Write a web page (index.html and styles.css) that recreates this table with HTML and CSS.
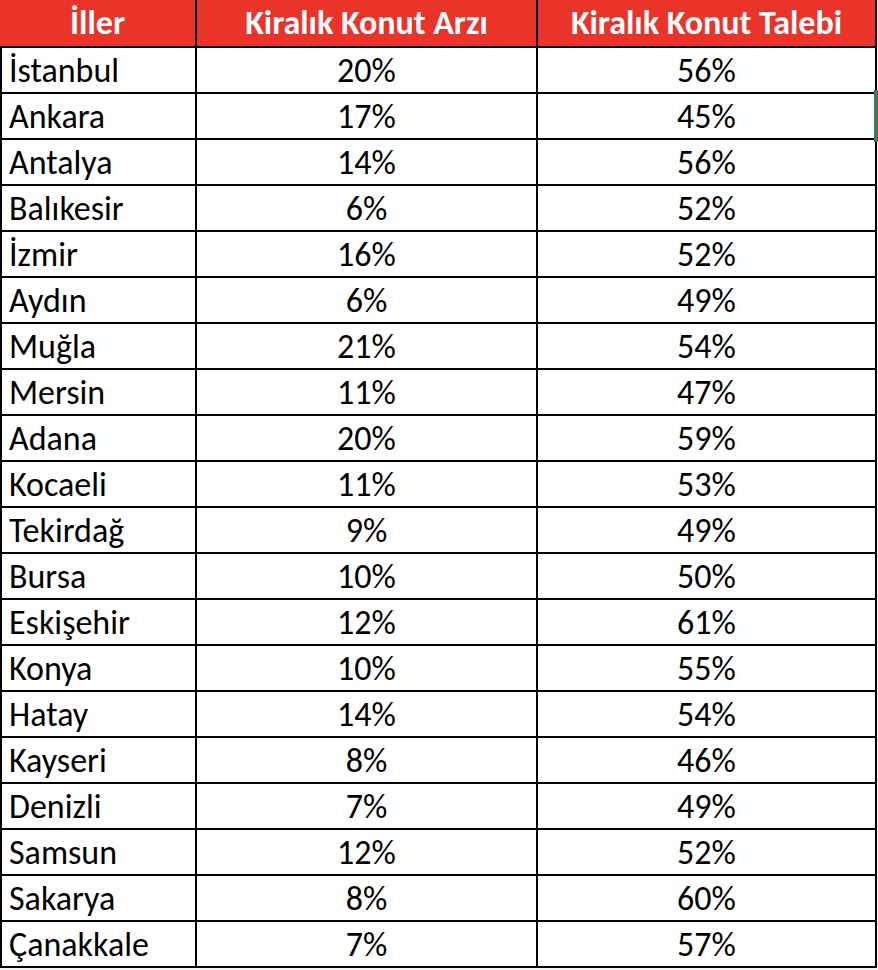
FILE: index.html
```html
<!DOCTYPE html>
<html lang="tr">
<head>
<meta charset="utf-8">
<title>Kiralık Konut</title>
<link rel="stylesheet" href="styles.css">
</head>
<body>
<div class="sheet">
  <div class="grid">
    <div class="hd">İller</div>
    <div class="hd">Kiralık Konut Arzı</div>
    <div class="hd">Kiralık Konut Talebi</div>

    <div class="c name">İstanbul</div><div class="c num">20%</div><div class="c num">56%</div>
    <div class="c name">Ankara</div><div class="c num">17%</div><div class="c num">45%</div>
    <div class="c name">Antalya</div><div class="c num">14%</div><div class="c num">56%</div>
    <div class="c name">Balıkesir</div><div class="c num">6%</div><div class="c num">52%</div>
    <div class="c name">İzmir</div><div class="c num">16%</div><div class="c num">52%</div>
    <div class="c name">Aydın</div><div class="c num">6%</div><div class="c num">49%</div>
    <div class="c name">Muğla</div><div class="c num">21%</div><div class="c num">54%</div>
    <div class="c name">Mersin</div><div class="c num">11%</div><div class="c num">47%</div>
    <div class="c name">Adana</div><div class="c num">20%</div><div class="c num">59%</div>
    <div class="c name">Kocaeli</div><div class="c num">11%</div><div class="c num">53%</div>
    <div class="c name">Tekirdağ</div><div class="c num">9%</div><div class="c num">49%</div>
    <div class="c name">Bursa</div><div class="c num">10%</div><div class="c num">50%</div>
    <div class="c name">Eskişehir</div><div class="c num">12%</div><div class="c num">61%</div>
    <div class="c name">Konya</div><div class="c num">10%</div><div class="c num">55%</div>
    <div class="c name">Hatay</div><div class="c num">14%</div><div class="c num">54%</div>
    <div class="c name">Kayseri</div><div class="c num">8%</div><div class="c num">46%</div>
    <div class="c name">Denizli</div><div class="c num">7%</div><div class="c num">49%</div>
    <div class="c name">Samsun</div><div class="c num">12%</div><div class="c num">52%</div>
    <div class="c name">Sakarya</div><div class="c num">8%</div><div class="c num">60%</div>
    <div class="c name">Çanakkale</div><div class="c num">7%</div><div class="c num">57%</div>
  </div>
  <div class="sel-mark"></div>
</div>
</body>
</html>
```

FILE: styles.css
```css
html, body {
  margin: 0;
  padding: 0;
  background: #ffffff;
}

.sheet {
  position: relative;
  width: 878px;
  height: 970px;
  background: #f3f3f3;
}

.grid {
  display: grid;
  grid-template-columns: 195px 339px 337px;
  grid-template-rows: 46px repeat(20, 44px);
  column-gap: 2px;
  row-gap: 2px;
  width: 877px;
  padding: 0 2px 2px 0;
  box-sizing: border-box;
  background: #000000;
  font-family: Carlito, Calibri, Lato, "Liberation Sans", sans-serif;
  color: #000000;
}

.hd {
  background: #e8342a;
  color: #ffffff;
  font-weight: 700;
  font-size: 34px;
  text-align: center;
  line-height: 1;
  display: flex;
  align-items: flex-end;
  justify-content: center;
  padding-bottom: 6px;
  box-sizing: border-box;
  white-space: nowrap;
}

.c {
  background: #ffffff;
  font-size: 34px;
  line-height: 1;
  display: flex;
  align-items: flex-end;
  padding-bottom: 4px;
  box-sizing: border-box;
  white-space: nowrap;
}

.name {
  border-left: 2px solid #000000;
  padding-left: 7px;
}

.num {
  justify-content: center;
}

.sel-mark {
  position: absolute;
  left: 874px;
  top: 90px;
  width: 4px;
  height: 52px;
  background: #3e7b52;
}
```
